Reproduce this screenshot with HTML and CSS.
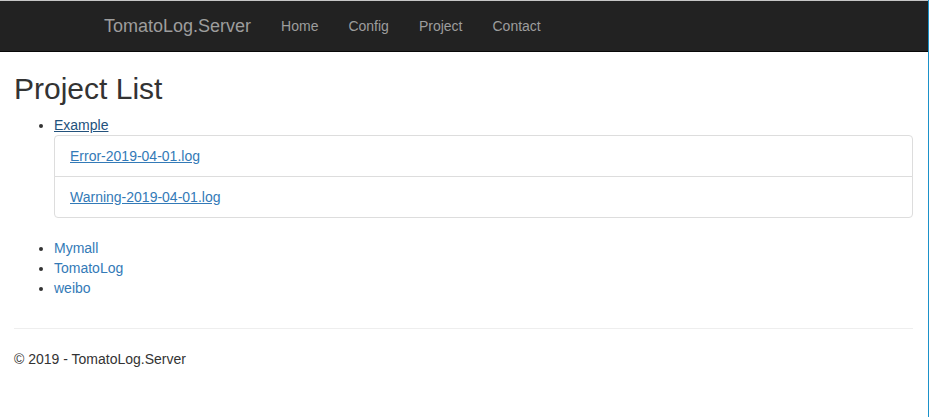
FILE: index.html
```html
<!DOCTYPE html>
<html lang="en">
<head>
  <meta charset="UTF-8" />
  <meta name="viewport" content="width=device-width, initial-scale=1" />
  <title>Project List - TomatoLog.Server</title>
  <link rel="stylesheet" href="styles.css">
</head>
<body>
  <nav class="navbar">
    <div class="container">
      <a class="navbar-brand" href="#">TomatoLog.Server</a>
      <ul class="navbar-nav">
        <li><a href="#">Home</a></li>
        <li><a href="#">Config</a></li>
        <li><a href="#">Project</a></li>
        <li><a href="#">Contact</a></li>
      </ul>
    </div>
  </nav>

  <div class="body-content">
    <h2>Project List</h2>
    <ul class="project-list">
      <li>
        <a class="active" href="#">Example</a>
        <div class="list-group">
          <a class="list-group-item" href="#">Error-2019-04-01.log</a>
          <a class="list-group-item" href="#">Warning-2019-04-01.log</a>
        </div>
      </li>
      <li><a href="#">Mymall</a></li>
      <li><a href="#">TomatoLog</a></li>
      <li><a href="#">weibo</a></li>
    </ul>
    <hr />
    <footer>
      <p>&copy; 2019 - TomatoLog.Server</p>
    </footer>
  </div>
</body>
</html>
```

FILE: styles.css
```css
* {
  box-sizing: border-box;
}

html,
body {
  height: 100%;
}

body {
  margin: 0;
  font-family: "Liberation Sans", Arial, sans-serif;
  font-size: 14px;
  line-height: 20px;
  color: #333;
  background-color: #fff;
  border-right: 1px solid #1b91c9;
}

a {
  color: #337ab7;
  text-decoration: none;
}

.navbar {
  height: 52px;
  background-color: #222;
  border-top: 1px solid #c6c6c6;
  border-bottom: 1px solid #080808;
}

.container {
  width: 750px;
  margin: 0 auto;
  padding: 0 15px;
  display: flex;
  align-items: center;
}

.navbar-brand {
  margin-left: -15px;
  padding: 15px;
  font-size: 18px;
  line-height: 20px;
  color: #9d9d9d;
}

.navbar-nav {
  display: flex;
  margin: 0;
  padding: 0;
  list-style: none;
}

.navbar-nav a {
  display: block;
  padding: 15px;
  line-height: 20px;
  color: #9d9d9d;
}

.body-content {
  padding: 0 15px 0 14px;
}

h2 {
  margin: 20px 0 10px;
  font-size: 30px;
  font-weight: 500;
  line-height: 33px;
}

.project-list {
  margin: 0;
  padding: 0 0 10px 40px;
}

.project-list a.active {
  color: #23527c;
  text-decoration: underline;
}

.list-group {
  margin-bottom: 20px;
  display: flex;
  flex-direction: column;
}

.list-group-item {
  display: block;
  padding: 10px 15px;
  margin-bottom: -1px;
  border: 1px solid #ddd;
  text-decoration: underline;
}

.list-group-item:first-child {
  border-radius: 4px 4px 0 0;
}

.list-group-item:last-child {
  margin-bottom: 0;
  border-radius: 0 0 4px 4px;
}

hr {
  margin: 20px 0;
  border: 0;
  border-top: 1px solid #eee;
}

footer p {
  margin: 0 0 10px;
}
```
